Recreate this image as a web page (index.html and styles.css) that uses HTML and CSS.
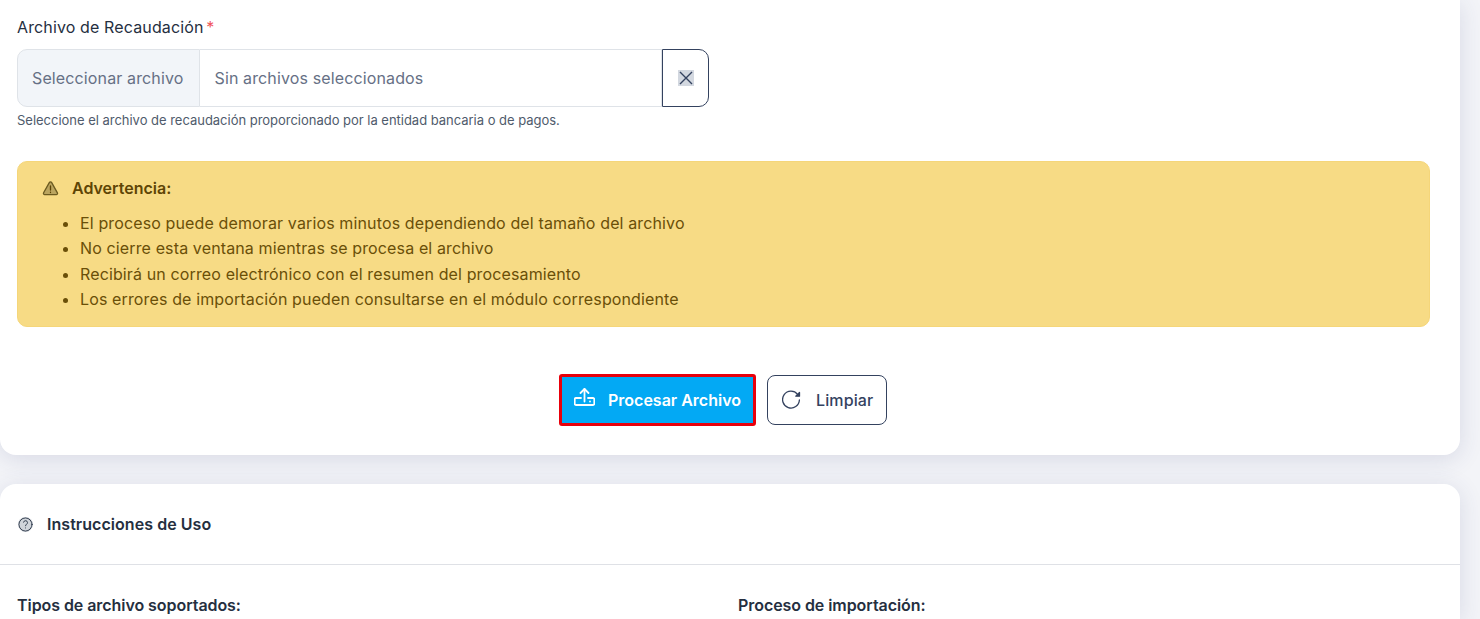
FILE: index.html
```html
<!DOCTYPE html><html lang="es"><head>
    <meta name="viewport" content="width=device-width, initial-scale=1">
    <title>Importar Recaudación</title>
    <link rel="stylesheet" href="styles.css">
  </head><body>
    <main class="page">
      <section class="card card-upload">
        <label class="field-label">Archivo de Recaudación <span class="req">*</span></label>
        <div class="file-group">
          <span class="file-btn">Seleccionar archivo</span>
          <span class="file-name">Sin archivos seleccionados</span>
          <button class="file-clear" type="button">
            <svg class="clear-icon" width="16" height="16" viewBox="0 0 16 16"><path d="M2 2L14 14M14 2L2 14"/></svg>
          </button>
        </div>
        <p class="help">Seleccione el archivo de recaudación proporcionado por la entidad bancaria o de pagos.</p>

        <div class="alert">
          <div class="alert-title">
            <svg class="icon warn-icon" width="17" height="17" viewBox="0 0 17 17"><path d="M7.3 2.6L1.6 12.8a1.2 1.2 0 0 0 1.1 1.8h11.6a1.2 1.2 0 0 0 1.1-1.8L9.7 2.6a1.4 1.4 0 0 0-2.4 0z"/><path class="warn-mark" d="M8.5 6v4M8.5 12.2v.3"/></svg>
            <strong>Advertencia:</strong>
          </div>
          <ul>
            <li>El proceso puede demorar varios minutos dependiendo del tamaño del archivo</li>
            <li>No cierre esta ventana mientras se procesa el archivo</li>
            <li>Recibirá un correo electrónico con el resumen del procesamiento</li>
            <li>Los errores de importación pueden consultarse en el módulo correspondiente</li>
          </ul>
        </div>

        <div class="actions">
          <button class="btn btn-primary" type="button">
            <svg class="icon upload-icon" width="21" height="24" viewBox="0 0 21 24"><path d="M10.5 13.5V1"/><path d="M6.5 5l4-4 4 4"/><path d="M7 10H2a1.3 1.3 0 0 0-1.3 1.3v4.4A1.3 1.3 0 0 0 2 17h17a1.3 1.3 0 0 0 1.3-1.3v-4.4A1.3 1.3 0 0 0 19 10h-5"/><path d="M16 13.5h.01"/></svg>
            Procesar Archivo
          </button>
          <button class="btn btn-outline" type="button">
            <svg class="icon reload-icon" width="20" height="20" viewBox="0 0 20 20"><path d="M15.6 4.4A8.4 8.4 0 1 0 17.4 10"/><path class="arrow-head" d="M17.5 2.5v3.7h-3.7z"/></svg>
            Limpiar
          </button>
        </div>
      </section>

      <section class="card card-help">
        <div class="card-head">
          <svg class="icon help-icon" width="15" height="15" viewBox="0 0 24 24"><circle cx="12" cy="12" r="10.5"/><path d="M12 17.5h.01"/><path d="M12 14c0-2.4 3.2-2.4 3.2-5a3.2 3.2 0 0 0-6.3-.7"/></svg>
          <h3>Instrucciones de Uso</h3>
        </div>
        <div class="card-body">
          <h4>Tipos de archivo soportados:</h4>
          <h4>Proceso de importación:</h4>
        </div>
      </section>
    </main>
  </body></html>
```

FILE: styles.css
```css
html, body {margin: 0; height: 619px; overflow: hidden;}
body {font-family: "Inter", "Noto Sans", sans-serif; background: #f3f4f8; color: #2b3648;}
svg {display: block; flex: none;}
.icon {fill: none; stroke: currentColor; stroke-width: 1.5; stroke-linecap: round; stroke-linejoin: round;}

.page {width: 1460px; height: 619px; display: flex; flex-direction: column; gap: 29px;}
.card {background: #fff; box-shadow: 0 4px 24px rgba(47, 60, 110, .14);}
.card-upload {height: 455px; flex: none; box-sizing: border-box; padding: 17px 30px 0 17px; border-radius: 0 0 16px 16px;}
.card-help {flex: 1; border-radius: 16px 16px 0 0;}

.field-label {display: block; font-size: 16px; letter-spacing: .13px; line-height: 21px; color: #252f3f;}
.req {margin-left: -2px; color: #f0565a;}

.file-group {display: flex; width: 692px; height: 58px; margin-top: 11px; font-size: 16px; letter-spacing: .13px; color: #667085;}
.file-btn {display: flex; align-items: center; padding: 0 16px 0 14px; background: #f2f5f9; border: 1px solid #dfe3e8; border-radius: 10px 0 0 10px;}
.file-name {flex: 1; display: flex; align-items: center; padding: 0 15px 0 14px; border: 1px solid #dfe3e8; border-left: 0;}
.file-clear {width: 47px; display: flex; align-items: center; justify-content: center; padding: 0; background: #fff; border: 1px solid #34425f; border-radius: 0 10px 10px 0;}
.clear-icon {background: #d3d8e0; stroke: #34425f; stroke-width: 1.4; fill: none;}
.help {margin: 4px 0 0; font-size: 13px; letter-spacing: -.02px; line-height: 18px; color: #4f5b6c;}

.alert {height: 166px; box-sizing: border-box; margin-top: 32px; padding: 15px 24px; background: #f7db85; border: 1px solid #f5d67a; border-radius: 10px; color: #6a4f08; font-size: 16px; letter-spacing: .13px;}
.alert-title {display: flex; align-items: center; gap: 13px; line-height: 22px; color: #5e4505;}
.alert-title strong {font-weight: 600; letter-spacing: 0;}
.warn-icon {fill: #bba55f; stroke: #6b5a20; stroke-width: 1.3;}
.warn-mark {stroke: #5e4505;}
.alert ul {margin: 12px 0 0; padding-left: 38px;}
.alert li {line-height: 25.4px;}

.actions {display: flex; justify-content: center; align-items: center; gap: 11px; margin-top: 47px; padding-right: 1px;}
.btn {display: flex; align-items: center; height: 50px; font: 500 16px "Inter", sans-serif; border-radius: 8px; background: #fff; box-sizing: border-box;}
.btn-primary {width: 197px; height: 52px; gap: 13px; padding: 0 12px; background: #03a9f4; color: #fff; border: 3px solid #e8000b; border-radius: 3px; font-weight: 600;}
.upload-icon {stroke-width: 1.8;}
.btn-outline {width: 120px; gap: 14px; padding: 0 14px; color: #34425f; border: 1px solid #34425f; letter-spacing: .13px;}
.reload-icon {stroke-width: 1.3;}
.arrow-head {fill: currentColor;}

.card-head {display: flex; align-items: center; gap: 14px; height: 80px; padding: 0 17px 0 18px; border-bottom: 1px solid #dfe1e6;}
.help-icon {background: #d0d4da; border-radius: 50%;}
.card-head h3 {margin: 0; font-size: 16px; letter-spacing: .05px; font-weight: 600; color: #252f3f;}
.card-body {display: grid; grid-template-columns: 721px 1fr; padding: 30px 17px 0;}
.card-body h4 {margin: 0; font-size: 16px; letter-spacing: -.06px; line-height: 20px; font-weight: 600; color: #252f3f;}
```
